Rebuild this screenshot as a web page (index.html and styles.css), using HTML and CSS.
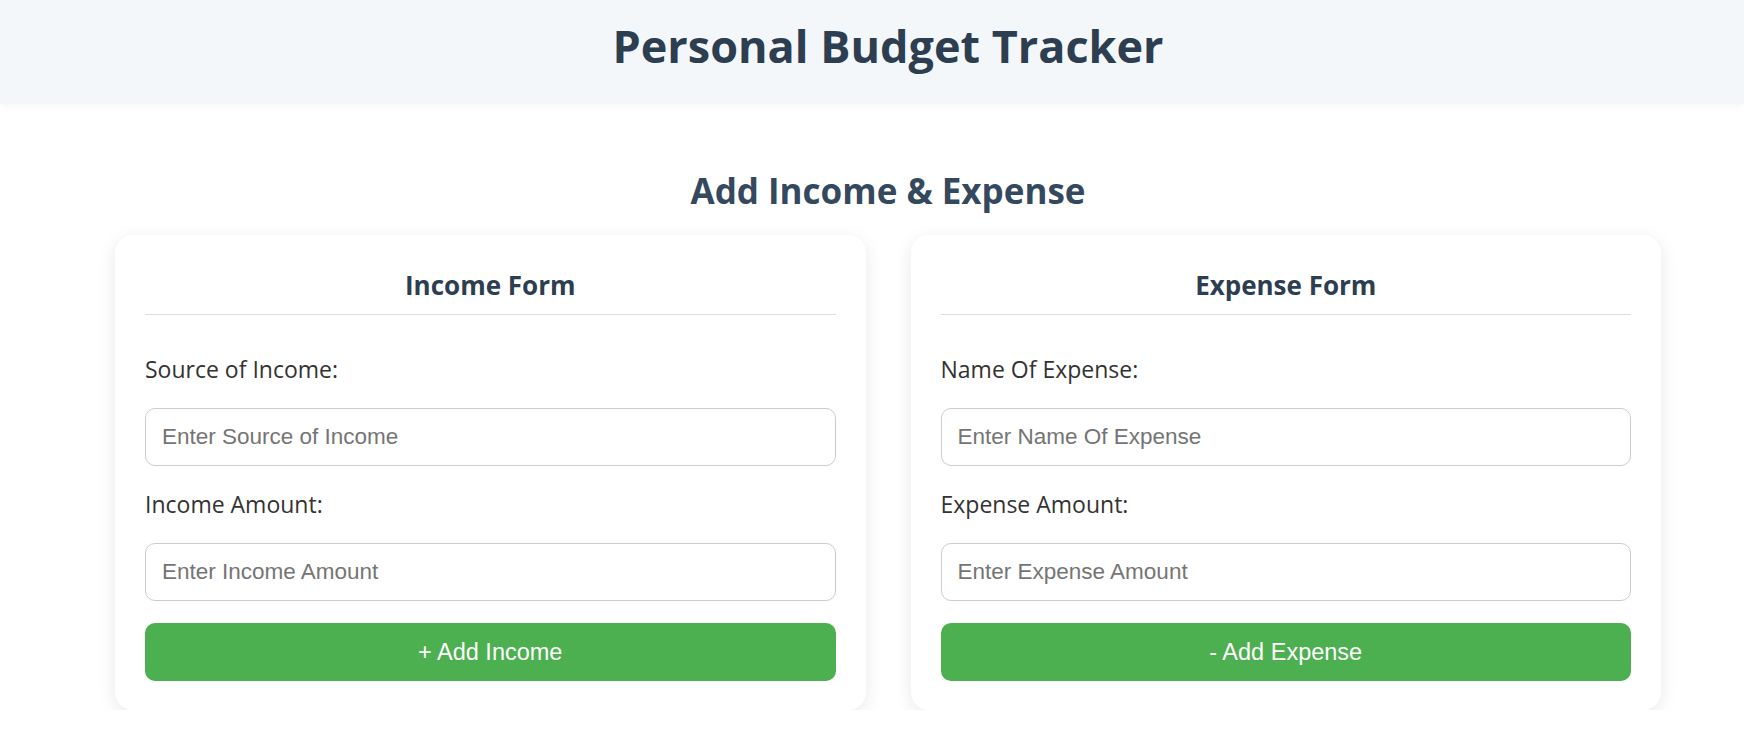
FILE: index.html
```html
<!DOCTYPE html>
<html lang="en">
<head>
<meta charset="UTF-8">
<title>Personal Budget Tracker</title>
<link rel="stylesheet" href="styles.css">
</head>
<body>
<header class="site-header">
  <div class="shift">
    <h1 class="site-title">Personal Budget Tracker</h1>
  </div>
</header>
<main class="shift">
  <section class="entry">
    <h2 class="section-title">Add Income &amp; Expense</h2>
    <div class="forms">
      <div class="card">
        <h3 class="card-title">Income Form</h3>
        <form class="form">
          <label class="label" for="src">Source of Income:</label>
          <input class="input" id="src" type="text" placeholder="Enter Source of Income">
          <label class="label" for="amt">Income Amount:</label>
          <input class="input" id="amt" type="number" placeholder="Enter Income Amount">
          <button class="btn" type="button">+ Add Income</button>
        </form>
      </div>
      <div class="card">
        <h3 class="card-title">Expense Form</h3>
        <form class="form">
          <label class="label" for="ename">Name Of Expense:</label>
          <input class="input" id="ename" type="text" placeholder="Enter Name Of Expense">
          <label class="label" for="eamt">Expense Amount:</label>
          <input class="input" id="eamt" type="number" placeholder="Enter Expense Amount">
          <button class="btn" type="button">- Add Expense</button>
        </form>
      </div>
    </div>
  </section>
</main>
</body>
</html>
```
FILE: styles.css
```css
* { box-sizing: border-box; }
html, body { margin: 0; padding: 0; background: #ffffff; }
body { font-family: "Open Sans", "Noto Sans", sans-serif; color: #333333; }

.shift { padding-left: 32px; }

.site-header {
  background: #f4f7fa;
  height: 104px;
  box-shadow: 0 2px 6px rgba(0, 0, 0, 0.04);
}
.site-title {
  margin: 0;
  padding-top: 15px;
  text-align: center;
  font-size: 45px;
  font-weight: 700;
  line-height: normal;
  color: #2c3e50;
}

.entry { padding-top: 63px; }
.section-title {
  margin: 0 0 21px;
  text-align: center;
  font-size: 35px;
  font-weight: 700;
  line-height: normal;
  color: #34495e;
}

.forms {
  width: 1546px;
  margin: 0 auto;
  display: grid;
  grid-template-columns: 1fr 1fr;
  gap: 45px;
}

.card {
  background: #ffffff;
  border-radius: 18px;
  padding: 32px 30px 29px;
  box-shadow: 0 4px 18px rgba(0, 0, 0, 0.09);
}
.card-title {
  margin: 0;
  padding-bottom: 11px;
  border-bottom: 1px solid #dddddd;
  text-align: center;
  font-size: 26px;
  font-weight: 700;
  line-height: normal;
  color: #2c3e50;
}

.form {
  display: flex;
  flex-direction: column;
  padding-top: 38px;
}
.label {
  font-size: 23px;
  line-height: 32px;
  color: #333333;
  margin-bottom: 22.5px;
}
.input {
  height: 58px;
  border: 1px solid #cccccc;
  border-radius: 10px;
  padding: 0 16px;
  font-family: "Liberation Sans", Arial, sans-serif;
  font-size: 22.5px;
  color: #333333;
  margin-bottom: 22.5px;
  outline: none;
  -moz-appearance: textfield;
}
.input::-webkit-outer-spin-button,
.input::-webkit-inner-spin-button { -webkit-appearance: none; margin: 0; }
.input::placeholder { color: #757575; }

.btn {
  height: 58px;
  border: none;
  border-radius: 10px;
  background: #4caf50;
  color: #ffffff;
  font-family: "Liberation Sans", Arial, sans-serif;
  font-size: 23.5px;
  cursor: pointer;
}
```
